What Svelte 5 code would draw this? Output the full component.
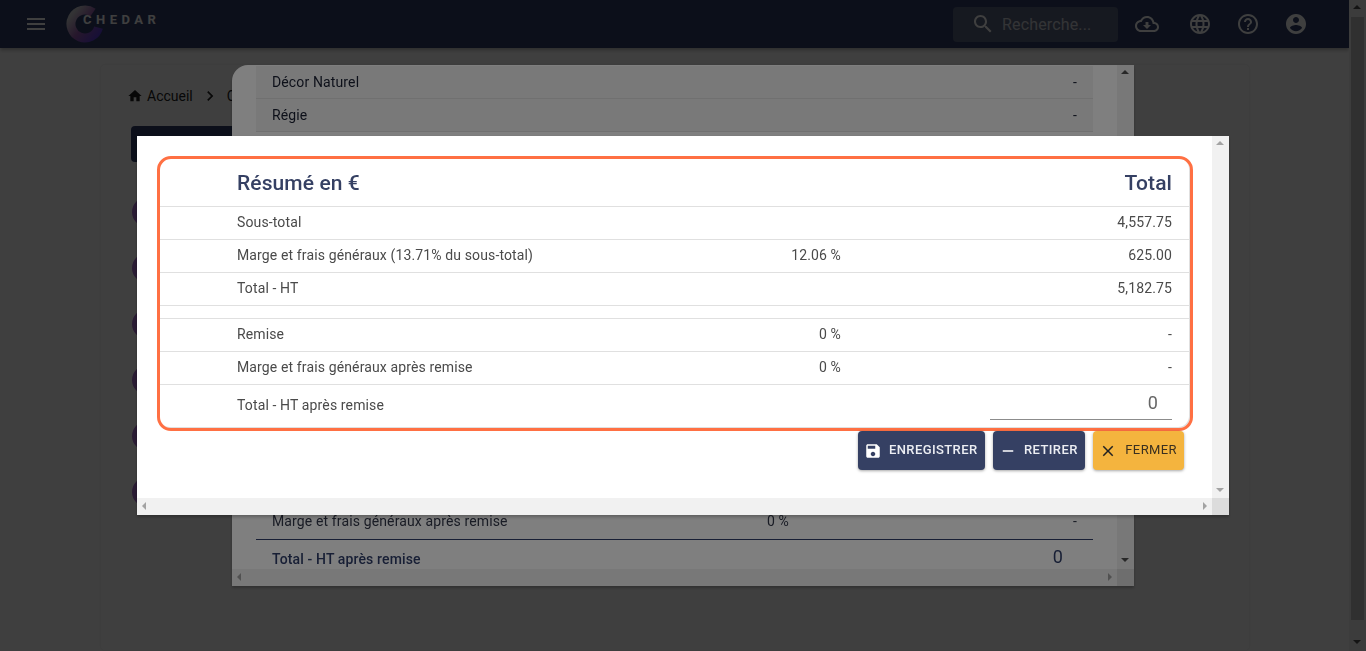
<script lang="ts">
	const backRowsTop = ['Décor Naturel', 'Régie'];
	const summaryRows = [
		{ label: 'Sous-total', pct: '', total: '4,557.75' },
		{ label: 'Marge et frais généraux (13.71% du sous-total)', pct: '12.06 %', total: '625.00' },
		{ label: 'Total - HT', pct: '', total: '5,182.75' }
	];
	const discountRows = [
		{ label: 'Remise', pct: '0 %', total: '-' },
		{ label: 'Marge et frais généraux après remise', pct: '0 %', total: '-' }
	];
</script>

{#snippet arrow(dir)}
	<span class="arrow {dir}"></span>
{/snippet}

{#snippet scrollbars()}
	<div class="sb-v">
		{@render arrow('up')}
		{@render arrow('down')}
	</div>
	<div class="sb-h">
		{@render arrow('left')}
		{@render arrow('right')}
		<span class="sb-corner"></span>
	</div>
{/snippet}

<div class="page">
	<div class="main-col">
		<header class="topbar">
			<button class="icon-btn menu" aria-label="menu">
				<svg width="24" height="24" viewBox="0 0 24 24"><path d="M3 18h18v-2H3v2zm0-5h18v-2H3v2zm0-7v2h18V6H3z" /></svg>
			</button>
			<div class="logo">
				<svg width="38" height="38" viewBox="0 0 38 38" fill="none">
					<defs>
						<linearGradient id="ring" x1="0" y1="0.2" x2="1" y2="1">
							<stop offset="0" stop-color="#cfcfd4" />
							<stop offset="0.45" stop-color="#9a5cb0" />
							<stop offset="1" stop-color="#5a3ce0" />
						</linearGradient>
					</defs>
					<path d="M27 7.5A14 14 0 1 0 32.5 22.6" stroke="url(#ring)" stroke-width="9" />
				</svg>
				<span class="logo-text">CHEDAR</span>
			</div>
			<div class="search">
				<svg width="24" height="24" viewBox="0 0 24 24"><path d="M15.5 14h-.79l-.28-.27C15.41 12.59 16 11.11 16 9.5 16 5.91 13.09 3 9.5 3S3 5.91 3 9.5 5.91 16 9.5 16c1.61 0 3.09-.59 4.23-1.57l.27.28v.79l5 4.99L20.49 19l-4.99-5zm-6 0C7.01 14 5 11.99 5 9.5S7.01 5 9.5 5 14 7.01 14 9.5 11.99 14 9.5 14z" /></svg>
				<span>Recherche...</span>
			</div>
			<button class="icon-btn cloud" aria-label="download">
				<svg width="24" height="24" viewBox="0 0 24 24"><path d="M19.35 10.04C18.67 6.59 15.64 4 12 4 9.11 4 6.6 5.64 5.35 8.04 2.34 8.36 0 10.91 0 14c0 3.31 2.69 6 6 6h13c2.76 0 5-2.24 5-5 0-2.64-2.05-4.78-4.65-4.96zM19 18H6c-2.21 0-4-1.79-4-4 0-2.05 1.53-3.76 3.56-3.97l1.07-.11.5-.95C8.08 7.14 9.94 6 12 6c2.62 0 4.88 1.86 5.39 4.43l.3 1.5 1.53.11c1.56.1 2.78 1.41 2.78 2.96 0 1.65-1.35 3-3 3zm-5.55-8h-2.9v3H8l4 4 4-4h-2.55z" /></svg>
			</button>
			<button class="icon-btn" aria-label="language">
				<svg width="24" height="24" viewBox="0 0 24 24"><path d="M11.99 2C6.47 2 2 6.48 2 12s4.47 10 9.99 10C17.52 22 22 17.52 22 12S17.52 2 11.99 2zm6.93 6h-2.95c-.32-1.25-.78-2.45-1.38-3.56 1.84.63 3.37 1.91 4.33 3.56zM12 4.04c.83 1.2 1.48 2.53 1.91 3.96h-3.82c.43-1.43 1.08-2.76 1.91-3.96zM4.26 14C4.1 13.36 4 12.69 4 12s.1-1.36.26-2h3.38c-.08.66-.14 1.32-.14 2 0 .68.06 1.34.14 2H4.26zm.82 2h2.95c.32 1.25.78 2.45 1.38 3.56-1.84-.63-3.37-1.9-4.33-3.56zm2.95-8H5.08c.96-1.66 2.49-2.93 4.33-3.56C8.81 5.55 8.35 6.75 8.03 8zM12 19.96c-.83-1.2-1.48-2.53-1.91-3.96h3.82c-.43 1.43-1.08 2.76-1.91 3.96zM14.34 14H9.66c-.09-.66-.16-1.32-.16-2 0-.68.07-1.35.16-2h4.68c.09.65.16 1.32.16 2 0 .68-.07 1.34-.16 2zm.25 5.56c.6-1.11 1.06-2.31 1.38-3.56h2.95c-.96 1.65-2.49 2.93-4.33 3.56zM16.36 14c.08-.66.14-1.32.14-2 0-.68-.06-1.34-.14-2h3.38c.16.64.26 1.31.26 2s-.1 1.36-.26 2h-3.38z" /></svg>
			</button>
			<button class="icon-btn" aria-label="help">
				<svg width="24" height="24" viewBox="0 0 24 24"><path d="M11 18h2v-2h-2v2zm1-16C6.48 2 2 6.48 2 12s4.48 10 10 10 10-4.48 10-10S17.52 2 12 2zm0 18c-4.41 0-8-3.59-8-8s3.59-8 8-8 8 3.59 8 8-3.59 8-8 8zm0-14c-2.21 0-4 1.79-4 4h2c0-1.1.9-2 2-2s2 .9 2 2c0 2-3 1.75-3 5h2c0-2.25 3-2.5 3-5 0-2.21-1.79-4-4-4z" /></svg>
			</button>
			<button class="icon-btn" aria-label="account">
				<svg width="24" height="24" viewBox="0 0 24 24"><path d="M12 2C6.48 2 2 6.48 2 12s4.48 10 10 10 10-4.48 10-10S17.52 2 12 2zm0 3c1.66 0 3 1.34 3 3s-1.34 3-3 3-3-1.34-3-3 1.34-3 3-3zm0 14.2c-2.5 0-4.71-1.28-6-3.22.03-1.99 4-3.08 6-3.08 1.99 0 5.97 1.09 6 3.08-1.29 1.94-3.5 3.22-6 3.22z" /></svg>
			</button>
		</header>

		<main class="content">
			<section class="card">
				<nav class="crumbs">
					<svg width="16" height="16" viewBox="0 0 24 24"><path d="M10 20v-6h4v6h5v-8h3L12 3 2 12h3v8z" /></svg>
					<span>Accueil</span>
					<svg class="chev" width="20" height="20" viewBox="0 0 24 24"><path d="M8.59 16.59L13.17 12 8.59 7.41 10 6l6 6-6 6z" /></svg>
					<span>Chantiers</span>
				</nav>
				<div class="dark-btn"></div>
				<div class="dots">
					{#each Array(6) as _}
						<span class="dot"></span>
					{/each}
				</div>
			</section>
		</main>
	</div>
	<div class="page-sb">
		{@render arrow('up')}
		<span class="page-thumb"></span>
		{@render arrow('down')}
	</div>
</div>

<div class="backdrop first"></div>

<div class="dialog back">
	<div class="dialog-body back-body">
		<div class="back-table">
			<div>
				{#each backRowsTop as label}
					<div class="back-row">
						<span>{label}</span>
						<span class="back-total">-</span>
					</div>
				{/each}
			</div>
			<div>
				<div class="back-row plain">
					<span class="back-label">Marge et frais généraux après remise</span>
					<span class="back-pct">0 %</span>
					<span class="back-total">-</span>
				</div>
				<div class="back-row last">
					<b>Total - HT après remise</b>
					<span class="back-zero">0</span>
				</div>
			</div>
		</div>
	</div>
	{@render scrollbars()}
</div>

<div class="backdrop second"></div>

<div class="dialog front">
	<div class="dialog-body front-body">
		<div class="summary">
			<div class="s-row head">
				<span class="s-label">Résumé en €</span>
				<span class="s-pct"></span>
				<span class="s-total">Total</span>
			</div>
			{#each summaryRows as row}
				<div class="s-row">
					<span class="s-label">{row.label}</span>
					<span class="s-pct">{row.pct}</span>
					<span class="s-total">{row.total}</span>
				</div>
			{/each}
			<div class="s-gap"></div>
			{#each discountRows as row}
				<div class="s-row">
					<span class="s-label">{row.label}</span>
					<span class="s-pct">{row.pct}</span>
					<span class="s-total">{row.total}</span>
				</div>
			{/each}
			<div class="s-row input-row">
				<span class="s-label">Total - HT après remise</span>
				<span class="s-pct"></span>
				<span class="s-input"><span>0</span></span>
			</div>
		</div>
		<div class="actions">
			<button class="btn navy">
				<svg width="18" height="18" viewBox="0 0 24 24"><path d="M17 3H5c-1.11 0-2 .9-2 2v14c0 1.1.89 2 2 2h14c1.1 0 2-.9 2-2V7l-4-4zm-5 16c-1.66 0-3-1.34-3-3s1.34-3 3-3 3 1.34 3 3-1.34 3-3 3zm3-10H5V5h10v4z" /></svg>
				ENREGISTRER
			</button>
			<button class="btn navy">
				<svg width="18" height="18" viewBox="0 0 24 24"><path d="M19 13H5v-2h14v2z" /></svg>
				RETIRER
			</button>
			<button class="btn amber">
				<svg width="18" height="18" viewBox="0 0 24 24"><path d="M19 6.41L17.59 5 12 10.59 6.41 5 5 6.41 10.59 12 5 17.59 6.41 19 12 13.41 17.59 19 19 17.59 13.41 12z" /></svg>
				FERMER
			</button>
		</div>
	</div>
	{@render scrollbars()}
</div>

<style>
	:global(body) {
		margin: 0;
		background: #fff;
		font-family: Roboto, 'Liberation Sans', sans-serif;
		overflow: hidden;
	}
	.page {
		display: flex;
		height: 651px;
		overflow: hidden;
	}
	.main-col {
		flex: 1;
		min-width: 0;
		display: flex;
		flex-direction: column;
	}
	.topbar {
		flex: none;
		height: 48px;
		display: flex;
		align-items: center;
		background: #303f6b;
		color: #fff;
		box-shadow: 0 2px 4px rgba(0, 0, 0, 0.3);
		position: relative;
		padding-right: 29px;
	}
	.icon-btn {
		width: 48px;
		height: 48px;
		padding: 0;
		display: flex;
		align-items: center;
		justify-content: center;
		border: 0;
		background: none;
		fill: #fff;
	}
	.menu {
		margin-left: 12px;
		width: 48px;
	}
	.cloud {
		margin-right: 5px;
	}
	.logo {
		display: flex;
		align-items: center;
		margin-left: 6px;
		position: relative;
	}
	.logo-text {
		margin: -9px 0 0 -21px;
		font-size: 13px;
		font-weight: 700;
		letter-spacing: 4.5px;
	}
	.search {
		margin-left: auto;
		width: 165px;
		height: 35px;
		margin-right: 5px;
		display: flex;
		align-items: center;
		gap: 7px;
		padding-left: 18px;
		box-sizing: border-box;
		background: #5a6480;
		border-radius: 4px;
		font-size: 16px;
		letter-spacing: 0.15px;
		fill: #fff;
	}
	.search span {
		opacity: 0.7;
	}
	.content {
		flex: 1;
		padding: 17px 100px 1px 101px;
		background: #fff;
	}
	.card {
		height: 100%;
		box-sizing: border-box;
		padding: 22px 0 0 26px;
		border-radius: 4px;
		box-shadow: 0 0 3px rgba(0, 0, 0, 0.12);
	}
	.crumbs {
		display: flex;
		align-items: center;
		gap: 4px;
		height: 18px;
		font-size: 14px;
		color: #222;
		fill: #222;
	}
	.chev {
		margin: 0 3px;
	}
	.dark-btn {
		width: 150px;
		height: 36px;
		margin: 21px 0 0 4px;
		border-radius: 4px;
		background: #303f6b;
	}
	.dots {
		display: flex;
		flex-direction: column;
		gap: 26px;
		margin: 35px 0 0 5px;
	}
	.dot {
		width: 30px;
		height: 30px;
		border-radius: 50%;
		background: #aa70d0;
	}
	.page-sb {
		flex: none;
		width: 17px;
		background: #f1f1f1;
		position: relative;
	}
	.page-thumb {
		position: absolute;
		left: 2px;
		right: 2px;
		top: 17px;
		height: 603px;
		background: #c1c1c1;
	}
	.backdrop {
		position: fixed;
		inset: 0;
		background: rgba(0, 0, 0, 0.5);
	}
	.dialog {
		position: fixed;
		box-sizing: border-box;
		background: #fff;
		overflow: hidden;
		box-shadow: 0 2px 3px rgba(0, 0, 0, 0.25);
	}
	.back {
		left: 232px;
		top: 65px;
		width: 902px;
		height: 521px;
		border-radius: 16px 0 0 0;
	}
	.front {
		left: 137px;
		top: 136px;
		width: 1092px;
		height: 379px;
	}
	.dialog-body {
		position: absolute;
		left: 0;
		top: 0;
		right: 17px;
		bottom: 17px;
		overflow: hidden;
	}
	.sb-v {
		position: absolute;
		top: 0;
		right: 0;
		bottom: 17px;
		width: 17px;
		background: #f1f1f1;
	}
	.sb-h {
		position: absolute;
		left: 0;
		right: 0;
		bottom: 0;
		height: 17px;
		background: #f1f1f1;
	}
	.sb-corner {
		position: absolute;
		right: 0;
		top: 0;
		width: 17px;
		height: 17px;
		background: #dcdcdc;
	}
	.arrow {
		position: absolute;
		width: 0;
		height: 0;
		border: 4px solid transparent;
	}
	.arrow.up {
		top: 5px;
		left: 4px;
		border-top: 0;
		border-bottom-color: #a3a3a3;
	}
	.arrow.down {
		bottom: 6px;
		left: 4px;
		border-bottom: 0;
		border-top-color: #a3a3a3;
	}
	.arrow.left {
		left: 5px;
		top: 4px;
		border-left: 0;
		border-right-color: #a3a3a3;
	}
	.arrow.right {
		right: 22px;
		top: 4px;
		border-right: 0;
		border-left-color: #a3a3a3;
	}
	.back .arrow.up {
		border-bottom-color: #505050;
	}
	.back .arrow.down {
		bottom: 7px;
		border-top-color: #505050;
	}
	.page-sb .arrow.up {
		border-bottom-color: #505050;
	}
	.page-sb .arrow.down {
		bottom: 7px;
		border-top-color: #505050;
	}
	.back-body {
		padding: 1px 24px 0;
	}
	.back-table {
		height: 100%;
		display: flex;
		flex-direction: column;
		justify-content: space-between;
		font-size: 14px;
		letter-spacing: 0.13px;
		color: #303f6b;
	}
	.back-row {
		box-sizing: border-box;
		height: 33px;
		display: flex;
		align-items: center;
		justify-content: space-between;
		padding: 0 16px;
		background: #f2f2f2;
		border-bottom: 1px solid #e0e0e0;
		color: #1a2033;
	}
	.back-row.plain {
		background: none;
		position: relative;
		height: 35px;
		padding-bottom: 2px;
		border-bottom: 1px solid #303f6b;
		color: #33384a;
	}
	.back-row.last {
		background: none;
		border: 0;
		height: 29px;
		align-items: flex-start;
		padding: 11px 30px 0 16px;
		color: #303f6b;
	}
	.back-row b {
		font-weight: 500;
	}
	.back-pct {
		position: absolute;
		left: 511px;
	}
	.back-zero {
		font-size: 18px;
		margin-top: -5px;
	}
	.front-body {
		padding: 20px 19px 0 20px;
	}
	.summary {
		box-sizing: border-box;
		width: 1036px;
		height: 275px;
		border: 3px solid #ff7043;
		border-radius: 14px;
		box-shadow: inset -1px -1px 0 #e0e0e0;
	}
	.s-row {
		display: grid;
		grid-template-columns: 1fr 110px 331px;
		align-items: center;
		box-sizing: border-box;
		height: 33px;
		padding: 0 18px 2px 77px;
		border-bottom: 1px solid #e0e0e0;
		font-size: 14px;
		letter-spacing: 0.13px;
		color: #4a4a4a;
	}
	.s-row.head {
		height: 48px;
		padding-bottom: 0;
		color: #354063;
		font-size: 21px;
		letter-spacing: 0.1px;
		font-weight: 500;
	}
	.s-gap {
		height: 13px;
		box-sizing: border-box;
		border-bottom: 1px solid #e0e0e0;
	}
	.s-pct,
	.s-total {
		text-align: right;
	}
	.s-row.input-row {
		height: 42px;
		border-bottom: 0;
	}
	.s-input {
		align-self: start;
		justify-self: end;
		box-sizing: border-box;
		width: 182px;
		height: 35px;
		padding: 7px 14px 0 0;
		text-align: right;
		font-size: 18px;
		color: #666;
		border-bottom: 1px solid #8c8c8c;
	}
	.actions {
		display: flex;
		justify-content: flex-end;
		gap: 8px;
		margin: 0 9px 0 0;
	}
	.btn {
		height: 39px;
		display: flex;
		align-items: center;
		gap: 7px;
		padding: 0 7.5px 2px 6px;
		border: 0;
		border-radius: 4px;
		font-family: inherit;
		font-size: 13px;
		font-weight: 500;
		letter-spacing: 0.4px;
		box-shadow: 0 1px 3px rgba(0, 0, 0, 0.35);
	}
	.btn svg {
		margin-top: 2px;
	}
	.btn.navy {
		background: #354063;
		color: #eceef3;
		fill: #fff;
	}
	.btn.amber {
		gap: 8px;
		padding-right: 7px;
		background: #f4b43e;
		color: #3a3020;
		font-weight: 400;
		fill: #222;
	}
</style>
